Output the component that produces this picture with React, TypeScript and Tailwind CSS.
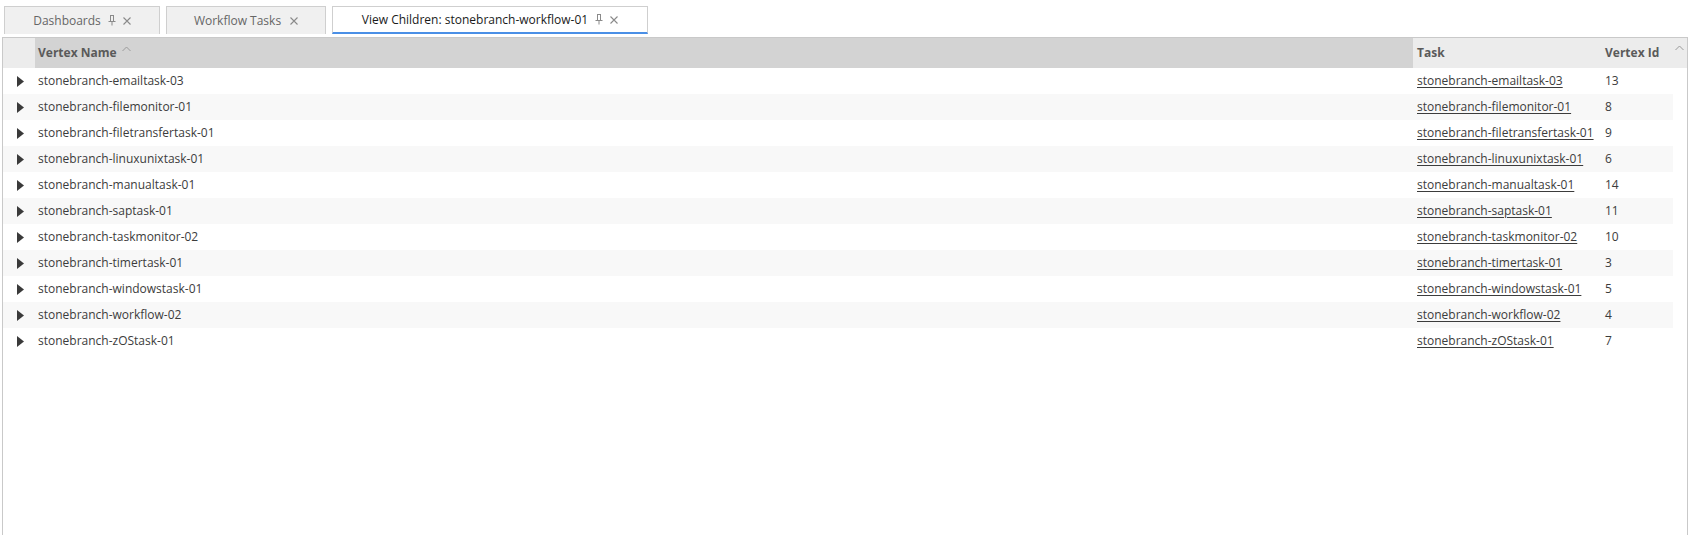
import React from "react";

const rows: [string, string][] = [
  ["stonebranch-emailtask-03", "13"],
  ["stonebranch-filemonitor-01", "8"],
  ["stonebranch-filetransfertask-01", "9"],
  ["stonebranch-linuxunixtask-01", "6"],
  ["stonebranch-manualtask-01", "14"],
  ["stonebranch-saptask-01", "11"],
  ["stonebranch-taskmonitor-02", "10"],
  ["stonebranch-timertask-01", "3"],
  ["stonebranch-windowstask-01", "5"],
  ["stonebranch-workflow-02", "4"],
  ["stonebranch-zOStask-01", "7"],
];

const Pin = () => (
  <svg width="8" height="11" viewBox="0 0 8 11" className="inline-block" fill="none" stroke="#8a8a8a" strokeWidth="1">
    <path d="M0.5 6.5H7.5" />
    <path d="M2 0.5H6M2.5 0.5V6.5M5.5 0.5V6.5" />
    <path d="M4 6.5V10.5" />
  </svg>
);

const Close = () => (
  <svg width="8" height="8" viewBox="0 0 8 8" className="inline-block" stroke="#8a8a8a" strokeWidth="1.1">
    <path d="M0.5 0.5L7.5 7.5M7.5 0.5L0.5 7.5" />
  </svg>
);

const Chevron = ({ color = "#9a9a9a" }: { color?: string }) => (
  <svg width="9" height="6" viewBox="0 0 9 6" fill="none" stroke={color} strokeWidth="1">
    <path d="M0.5 5L4.5 1L8.5 5" />
  </svg>
);

const Tri = () => (
  <svg width="7" height="11" viewBox="0 0 7 11">
    <path d="M0 0L7 5.5L0 11Z" fill="#3a3a3a" />
  </svg>
);

export default function App() {
  return (
    <div
      className="w-[1692px] h-[535px] overflow-hidden bg-white text-[12px]"
      style={{ fontFamily: '"Open Sans", "Noto Sans", sans-serif' }}
    >
      {/* Tabs */}
      <div className="flex gap-[6px] pt-[6px] pl-[4px] h-[34px]">
        <div className="w-[156px] h-[28px] flex items-center justify-center gap-[7px] bg-[#f0f0f0] border border-[#cfcfcf] border-b-0 text-[#666]">
          <span>Dashboards</span>
          <Pin />
          <Close />
        </div>
        <div className="w-[160px] h-[28px] flex items-center justify-center gap-[9px] bg-[#f0f0f0] border border-[#cfcfcf] border-b-0 text-[#666]">
          <span>Workflow Tasks</span>
          <Close />
        </div>
        <div className="w-[316px] h-[28px] flex items-center justify-center gap-[7px] bg-white border border-[#cfcfcf] border-b-2 border-b-[#4a8fe6] text-[#1a1a1a]">
          <span>View Children: stonebranch-workflow-01</span>
          <Pin />
          <Close />
        </div>
      </div>

      {/* Grid */}
      <div className="mt-[3px] ml-[2px] w-[1686px] h-[600px] border border-[#c9c9c9] flex flex-col">
        <div className="flex h-[30px] bg-[#ececec] text-[#5a5a5a] font-bold">
          <div className="w-[32px]" />
          <div className="w-[1378px] bg-[#d3d3d3] flex items-center pl-[3px]">
            <span>Vertex Name</span>
            <span className="ml-[5px] -mt-[8px]"><Chevron /></span>
          </div>
          <div className="w-[188px] flex items-center pl-[4px]">Task</div>
          <div className="w-[70px] flex items-center pl-[4px]">Vertex Id</div>
          <div className="flex-1 flex justify-end pr-[3px] -mt-[10px] items-center">
            <Chevron />
          </div>
        </div>
        <div className="w-[1670px] text-[#3c3c3c]">
          {rows.map(([name, id], i) => (
            <div key={name} className={`flex h-[26px] items-center ${i % 2 === 1 ? "bg-[#f8f8f8]" : "bg-white"}`}>
              <div className="w-[32px] flex justify-center pl-[3px]">
                <Tri />
              </div>
              <div className="w-[1378px] pl-[3px]">{name}</div>
              <div className="w-[188px] pl-[4px] underline underline-offset-2 whitespace-nowrap">{name}</div>
              <div className="w-[70px] pl-[4px]">{id}</div>
            </div>
          ))}
        </div>
      </div>
    </div>
  );
}
